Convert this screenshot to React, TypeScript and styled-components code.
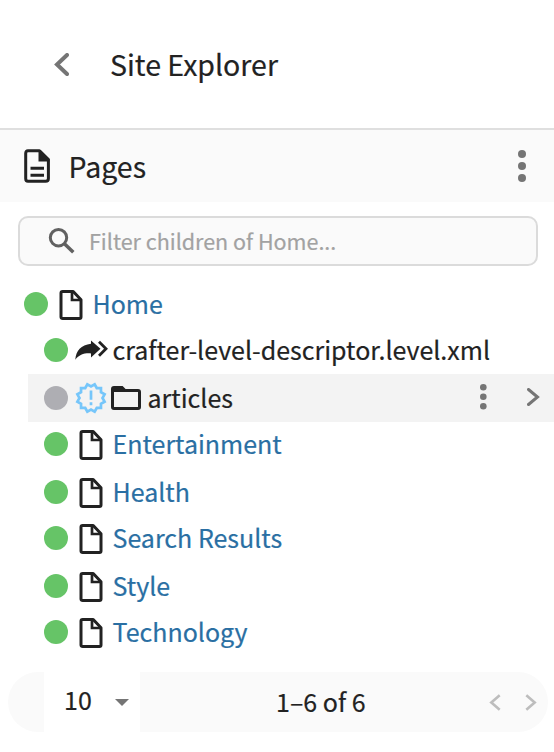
import React from "react";
import styled, { createGlobalStyle } from "styled-components";

const GlobalStyle = createGlobalStyle`
  * { box-sizing: border-box; }
  body {
    margin: 0;
    background: #fff;
    color: #222;
    font-family: "Noto Sans CJK SC", "Open Sans", sans-serif;
    -webkit-text-stroke: 0.2px currentColor;
  }
  svg { display: block; flex: none; }
`;

const Panel = styled.main`
  width: 554px;
  height: 752px;
  display: flex;
  flex-direction: column;
  overflow: hidden;
`;

const Header = styled.header`
  height: 130px;
  display: flex;
  align-items: center;
  padding-left: 54px;
  border-bottom: 2px solid #dfdfdf;
`;

const Title = styled.h1`
  margin: 0 0 0 41px;
  font-size: 28.5px;
  font-weight: 400;
  line-height: 40px;
`;

const SectionBar = styled.div`
  height: 72px;
  display: flex;
  align-items: center;
  padding: 0 28px 0 23px;
  background: #fafafa;
`;

const SectionTitle = styled.h2`
  flex: 1;
  margin: 0 0 0 17.5px;
  font-size: 28.5px;
  font-weight: 400;
  line-height: 40px;
`;

const Search = styled.label`
  height: 50px;
  margin: 14px 16px 0 18px;
  display: flex;
  align-items: center;
  padding-left: 28px;
  gap: 14px;
  background: #fafafa;
  border: 2px solid #dbdbdb;
  border-radius: 10px;
`;

const SearchInput = styled.input`
  flex: 1;
  height: 40px;
  padding: 0 0 2px;
  border: 0;
  outline: 0;
  background: transparent;
  font: 400 21.5px "Noto Sans CJK SC", sans-serif;
  -webkit-text-stroke: 0.2px currentColor;
  color: #222;
  &::placeholder { color: #a2a2a2; opacity: 1; }
`;

const Tree = styled.ul`
  margin: 14px 0 0;
  padding: 0;
  list-style: none;
`;

const Row = styled.li<{ $root?: boolean; $active?: boolean }>`
  height: 48px;
  margin-left: ${(p) => (p.$root ? 8 : 28)}px;
  padding: 0 14px 0 16px;
  display: flex;
  align-items: center;
  background: ${(p) => (p.$active ? "#f3f3f3" : "transparent")};
  &:nth-child(even) { margin-top: -2px; }
`;

const Status = styled.span<{ $muted?: boolean }>`
  width: 24px;
  height: 24px;
  border-radius: 50%;
  background: ${(p) => (p.$muted ? "#aeaeb3" : "#66c467")};
`;

const Icons = styled.span<{ $gap: number }>`
  display: flex;
  align-items: center;
  gap: 4px;
  margin-left: ${(p) => p.$gap}px;
`;

const Label = styled.span<{ $link?: boolean; $gap: number }>`
  flex: 1;
  margin: 0 0 2px ${(p) => p.$gap}px;
  font-size: 25px;
  line-height: 40px;
  white-space: nowrap;
  color: ${(p) => (p.$link ? "#2a6fa3" : "#222")};
`;

const Actions = styled.span`
  display: flex;
  align-items: center;
  gap: 40px;
  margin-bottom: 2px;
`;

const Pager = styled.footer`
  height: 60px;
  margin: 16px 6px 0 8px;
  display: flex;
  align-items: center;
  padding: 0 11px 0 36px;
  background: #fafafa;
  border-radius: 30px;
  font-size: 25px;
  line-height: 40px;
`;

const PageSize = styled.div`
  width: 96px;
  height: 60px;
  padding: 0 11px 0 20px;
  display: flex;
  align-items: center;
  justify-content: space-between;
  background: #fff;
`;

const PageSizeValue = styled.span`
  margin-bottom: 6px;
`;

const Range = styled.span`
  flex: 1;
  margin: 0 0 2px 136px;
`;

const PagerNav = styled.span`
  display: flex;
  gap: 24px;
`;

const Chevron = ({ w, h, stroke, color, left }: { w: number; h: number; stroke: number; color: string; left?: boolean }) => {
  const s = stroke / 2;
  const d = left ? `M${w - s} ${s}L${s + 1} ${h / 2}L${w - s} ${h - s}` : `M${s} ${s}L${w - s - 1} ${h / 2}L${s} ${h - s}`;
  return (
    <svg width={w} height={h} viewBox={`0 0 ${w} ${h}`} fill="none" stroke={color} strokeWidth={stroke} strokeLinecap={stroke > 2.7 ? "round" : "butt"}>
      <path d={d} />
    </svg>
  );
};

const Dots = ({ r, step }: { r: number; step: number }) => (
  <svg width={r * 2} height={r * 2 + step * 2} fill="#757575">
    <circle cx={r} cy={r} r={r} />
    <circle cx={r} cy={r + step} r={r} />
    <circle cx={r} cy={r + step * 2} r={r} />
  </svg>
);

const DocumentIcon = () => (
  <svg width="28" height="34" viewBox="0 0 28 34" fill="none" stroke="#222" strokeWidth="3">
    <path d="M5 1.7H16.5L25.4 10.6V29.5Q25.4 32.3 22.6 32.3H5Q2.7 32.3 2.7 29.5V4.5Q2.7 1.7 5 1.7Z" strokeLinejoin="round" />
    <path d="M15.5 1H17.5L26.5 10V12.5H15.5Z" fill="#222" stroke="none" />
    <path d="M7.5 19.3H21M7.5 26.2H21" />
  </svg>
);

const PageIcon = () => (
  <svg width="24" height="32" viewBox="0 0 24 32" fill="none" stroke="#222" strokeWidth="3">
    <path d="M3.7 3.5H14.2L22 11.8V29Q22 30.5 20.5 30.5H3.7Q2 30.5 2 29V5Q2 3.5 3.7 3.5Z" strokeLinejoin="round" />
    <path d="M13 3.5V12H22" strokeWidth="2.7" />
  </svg>
);

const ForwardIcon = () => (
  <svg width="34" height="20" viewBox="0 0 34 20" fill="#222">
    <path d="M.3 19.8C1 10.5 6 5 16 3.8V.5L25.5 8.7L16 17.4V13.4C9 13 4 14.7 .3 19.8Z" />
    <path d="M24 1.8L31 8.7L24 15.8" fill="none" stroke="#222" strokeWidth="2.8" />
  </svg>
);

const sealPoints = Array.from({ length: 24 }, (_, i) => {
  const radius = i % 2 ? 14.1 : 11.5;
  const a = (i * Math.PI) / 12;
  return `${(16 + radius * Math.cos(a)).toFixed(2)},${(16 + radius * Math.sin(a)).toFixed(2)}`;
}).join(" ");

const NewBadgeIcon = () => (
  <svg width="32" height="32" viewBox="0 0 32 32" fill="none" stroke="#76c6fa" strokeWidth="2.7">
    <polygon points={sealPoints} />
    <path d="M16 8.5V17.8M16 20.3V23.2" />
  </svg>
);

const FolderIcon = () => (
  <svg width="30" height="24" viewBox="0 0 30 24">
    <path d="M1.5 3Q1.5 1.5 3 1.5H11L14 4.5H27Q28.5 4.5 28.5 6V21Q28.5 22.5 27 22.5H3Q1.5 22.5 1.5 21Z" fill="none" stroke="#222" strokeWidth="3" />
    <path d="M1.5 1.5H11L14 4.5V6H1.5Z" fill="#222" />
  </svg>
);

const SearchIcon = () => (
  <svg width="27" height="26" viewBox="0 0 27 26" fill="none" stroke="#616161" strokeWidth="3">
    <circle cx="10.5" cy="9.7" r="8.2" />
    <path d="M16.2 15.4L25.3 24.3" strokeWidth="3.5" />
  </svg>
);

const pages = ["Entertainment", "Health", "Search Results", "Style", "Technology"];

export default function App() {
  return (
    <>
      <GlobalStyle />
      <Panel>
        <Header>
          <Chevron w={15} h={23} stroke={4} color="#757575" left />
          <Title>Site Explorer</Title>
        </Header>
        <SectionBar>
          <DocumentIcon />
          <SectionTitle>Pages</SectionTitle>
          <Dots r={4} step={12} />
        </SectionBar>
        <Search>
          <SearchIcon />
          <SearchInput placeholder="Filter children of Home..." />
        </Search>
        <Tree>
          <Row $root>
            <Status />
            <Icons $gap={11}><PageIcon /></Icons>
            <Label $link $gap={9.5}>Home</Label>
          </Row>
          <Row>
            <Status />
            <Icons $gap={7}><ForwardIcon /></Icons>
            <Label $gap={3.5}>crafter-level-descriptor.level.xml</Label>
          </Row>
          <Row $active>
            <Status $muted />
            <Icons $gap={7}><NewBadgeIcon /><FolderIcon /></Icons>
            <Label $gap={6.5}>articles</Label>
            <Actions>
              <Dots r={3.3} step={9.5} />
              <Chevron w={13} h={18} stroke={3} color="#757575" />
            </Actions>
          </Row>
          {pages.map((name) => (
            <Row key={name}>
              <Status />
              <Icons $gap={11}><PageIcon /></Icons>
              <Label $link $gap={9.5}>{name}</Label>
            </Row>
          ))}
        </Tree>
        <Pager>
          <PageSize>
            <PageSizeValue>10</PageSizeValue>
            <svg width="14" height="7" viewBox="0 0 14 7" fill="#757575"><path d="M0 0H14L7 7Z" /></svg>
          </PageSize>
          <Range>1–6 of 6</Range>
          <PagerNav>
            <Chevron w={12} h={17} stroke={2.6} color="#bdbdbd" left />
            <Chevron w={12} h={17} stroke={2.6} color="#bdbdbd" />
          </PagerNav>
        </Pager>
      </Panel>
    </>
  );
}
